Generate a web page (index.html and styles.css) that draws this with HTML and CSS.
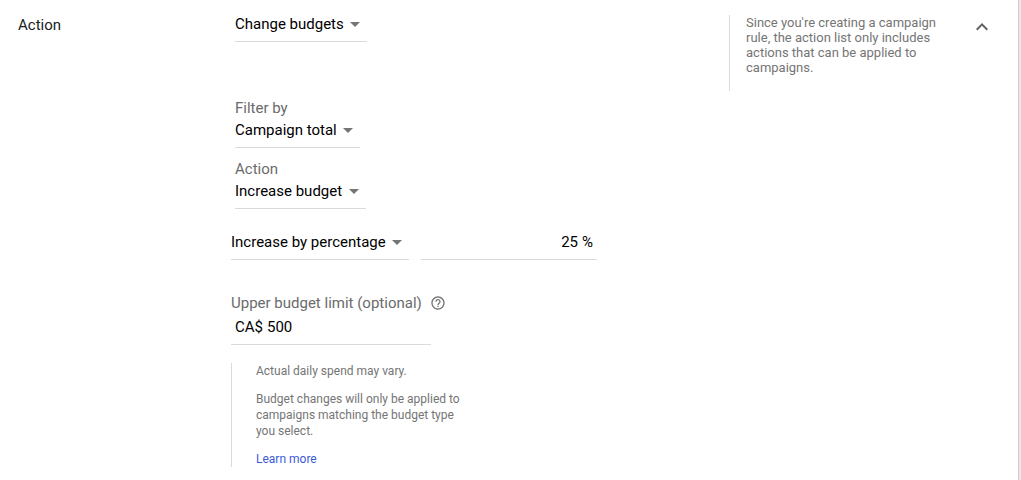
FILE: index.html
```html
<!DOCTYPE html>
<html lang="en">

<head>
  <meta charset="UTF-8">
  <title>Campaign rule</title>
  <meta name="viewport" content="width=device-width, initial-scale=1">
  <link rel="stylesheet" href="styles.css">
</head>

<body>
  <form class="panel">
    <h2 class="panel-title">Action</h2>

    <div class="settings">
      <div class="group">
        <div class="dropdown">
          <select aria-label="Action type">
            <option>Change budgets</option>
          </select>
        </div>
      </div>

      <div class="group group-filter">
        <div class="field">
          <label for="filter">Filter by</label>
          <div class="dropdown">
            <select id="filter">
              <option>Campaign total</option>
            </select>
          </div>
        </div>
        <div class="field">
          <label for="action">Action</label>
          <div class="dropdown">
            <select id="action">
              <option>Increase budget</option>
            </select>
          </div>
        </div>
      </div>

      <div class="amount-row">
        <div class="dropdown">
          <select aria-label="Change type">
            <option>Increase by percentage</option>
          </select>
        </div>
        <div class="text-box text-box-percent">
          <input id="percent" class="align-right" value="25" aria-label="Percentage">
          <label for="percent">%</label>
        </div>
      </div>

      <div class="limit">
        <div class="limit-label">
          <label for="limit">Upper budget limit (optional)</label>
          <button type="button" class="icon-btn icon-btn-help" aria-label="Help">
            <svg width="16" height="16" viewBox="0 0 24 24">
              <path d="M11 18h2v-2h-2v2zm1-16C6.480 2 2 6.480 2 12s4.480 10 10 10 10-4.480 10-10S17.520 2 12 2zm0 18c-4.410 0-8-3.590-8-8s3.590-8 8-8 8 3.590 8 8-3.590 8-8 8zm0-14c-2.210 0-4 1.790-4 4h2c0-1.100.9-2 2-2s2 .9 2 2c0 2-3 1.750-3 5h2c0-2.250 3-2.500 3-5 0-2.210-1.790-4-4-4z"/>
            </svg>
          </button>
        </div>
        <div class="text-box text-box-limit">
          <label for="limit">CA$</label>
          <input id="limit" value="500">
        </div>
      </div>

      <div class="note">
        <p>Actual daily spend may vary.</p>
        <p>Budget changes will only be applied to campaigns matching the budget type you select.</p>
        <a href="#">Learn more</a>
      </div>
    </div>

    <aside class="hint">Since you're creating a campaign rule, the action list only includes actions that can be applied to campaigns.</aside>

    <button type="button" class="icon-btn collapse" aria-label="Collapse">
      <svg width="24" height="24" viewBox="0 0 24 24">
        <path d="M12 8l-6 6 1.410 1.410L12 10.830l4.590 4.580L18 14z"/>
      </svg>
    </button>
  </form>
</body>

</html>
```
FILE: styles.css
```css
* {
  box-sizing: border-box;
}

body {
  margin: 0;
  background: #e8e8e8;
  color: #000;
  font: 15px/20px Roboto, sans-serif;
}

.panel {
  display: grid;
  grid-template-columns: 213px 1fr 241px 24px;
  min-height: 100vh;
  margin-right: 3px;
  padding: 12px 24px 13px 18px;
  background: #fff;
  box-shadow: 1px 0 0 #cecece;
}

.panel-title {
  margin: 3px 0 0;
  color: #212121;
  font-size: 15px;
  font-weight: 400;
}

/* form controls */

input,
select {
  margin: 0;
  padding: 0;
  border: 0;
  outline: 0;
  background: transparent;
  color: inherit;
  font: inherit;
}

.dropdown {
  position: relative;
  width: fit-content;
}

.dropdown select {
  display: block;
  height: 30px;
  padding: 0 23px 5px 0;
  border-bottom: 1px solid #dadada;
  appearance: none;
  cursor: pointer;
}

.dropdown::after {
  content: "";
  position: absolute;
  top: 10px;
  right: 7px;
  border: 5px solid transparent;
  border-top-color: #757575;
  border-bottom: 0;
  pointer-events: none;
}

.text-box {
  display: flex;
  gap: 4px;
  height: 30px;
  padding: 0 4px 5px;
  border-bottom: 1px solid #dadada;
  line-height: 24px;
}

.text-box input {
  flex: 1;
  min-width: 0;
}

.text-box-percent {
  width: 176px;
}

.text-box-limit {
  width: 200px;
}

.align-right {
  text-align: right;
}

.icon-btn {
  display: flex;
  padding: 0;
  border: 0;
  background: none;
  cursor: pointer;
  fill: #616161;
}

.icon-btn-help {
  fill: #757575;
}

/* settings column */

.group {
  padding-left: 4px;
}

.group-filter {
  display: grid;
  gap: 11px;
  margin-top: 56px;
}

.field label,
.limit-label {
  display: block;
  color: #6b6b6b;
}

.amount-row {
  display: flex;
  gap: 12px;
  margin-top: 21px;
}

.limit {
  display: grid;
  gap: 2px;
  margin-top: 33px;
}

.limit-label {
  display: flex;
  align-items: center;
  gap: 8px;
}

.note {
  display: grid;
  gap: 12px;
  width: 236px;
  margin-top: 18px;
  padding-left: 24px;
  border-left: 1px solid #dadada;
  color: #757575;
  font-size: 12px;
  line-height: 16px;
}

.note p {
  margin: 0;
}

.note a {
  color: #3b5bdb;
  text-decoration: none;
}

/* right side */

.hint {
  align-self: start;
  margin: 3px 30px 0 0;
  padding: 0 0 16px 16px;
  border-left: 1px solid #dadada;
  color: #757575;
  font-size: 13px;
  line-height: 15px;
}

.collapse {
  align-self: start;
  margin-top: 3px;
}
```
